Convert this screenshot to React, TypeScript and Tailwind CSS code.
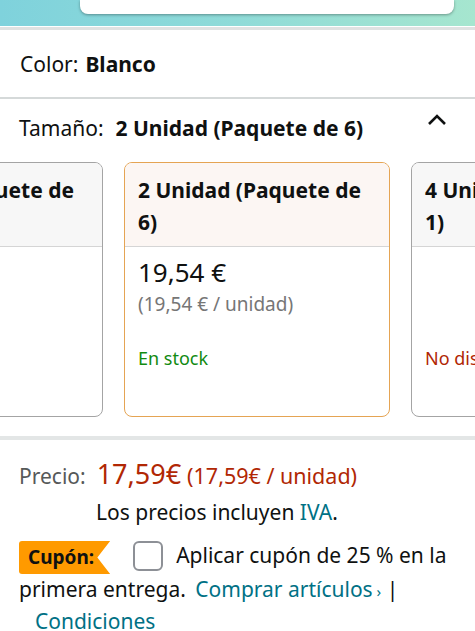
type Option = {
  label: string;
  price?: string;
  unit?: string;
  stock: string;
  inStock: boolean;
  selected?: boolean;
};

const options: Option[] = [
  { label: '1 Unidad (Paquete de 3)', price: '', unit: '', stock: '', inStock: true },
  { label: '2 Unidad (Paquete de 6)', price: '19,54 €', unit: '(19,54 € / unidad)', stock: 'En stock', inStock: true, selected: true },
  { label: '4 Unidad (Paquete de 1)', stock: 'No disponible', inStock: false },
];

function SizeCard({ opt }: { opt: Option }) {
  return (
    <div
      className={`shrink-0 w-[266px] h-[255px] rounded-[8px] border overflow-hidden flex flex-col ${
        opt.selected ? 'border-[#e5a453]' : 'border-[#a4a4a4]'
      }`}
    >
      <div
        className={`h-[84px] px-[13px] pt-[11px] font-bold text-[21px] leading-[32px] text-[#0f1111] border-b ${
          opt.selected ? 'bg-[#fcf6f3] border-[#d5d5d5]' : 'bg-[#f7f7f7] border-[#d5d5d5]'
        }`}
      >
        {opt.label}
      </div>
      <div className="px-[13px] pt-[8px] flex flex-col">
        <div className="h-[34px] text-[26px] leading-[34px] text-[#0f1111]">{opt.price}</div>
        <div className="h-[30px] text-[19px] leading-[30px] text-[#767676]">{opt.unit}</div>
        <div
          className={`mt-[24px] text-[18px] leading-[30px] ${opt.inStock ? 'text-[#118a11]' : 'text-[#b12704]'}`}
        >
          {opt.stock}
        </div>
      </div>
    </div>
  );
}

export default function App() {
  return (
    <div className="w-[475px] h-[631px] overflow-hidden bg-white text-[#0f1111] font-['Noto_Sans',sans-serif]">
      {/* top search band */}
      <div className="h-[26px] bg-gradient-to-r from-[#7fd2dc] via-[#8fdbd8] to-[#a6e6cf] flex justify-end pr-[21px]">
        <div className="w-[374px] h-[14px] bg-white rounded-b-[8px] shadow-[0_1px_3px_rgba(0,0,0,0.35)]" />
      </div>
      <div className="h-[1px] bg-white" />
      <div className="h-[3px] bg-[#dfe2e2]" />

      <div className="h-[67px] flex items-center px-[20px] pt-[3px] text-[21px]">
        <span>Color:</span>
        <span className="ml-[7px] font-bold">Blanco</span>
      </div>
      <div className="h-[2px] bg-[#d5d9d9]" />

      <div className="h-[60px] flex items-center pl-[19px] pr-[28px] text-[21px]">
        <span>Tamaño:</span>
        <span className="ml-[12px] font-bold">2 Unidad (Paquete de 6)</span>
        <svg className="ml-auto mb-[18px]" width="20" height="12" viewBox="0 0 20 12" fill="none">
          <polyline points="2,10 10,2 18,10" stroke="#0f1111" strokeWidth="2.6" />
        </svg>
      </div>

      <div className="flex gap-[21px] ml-[-163px] mt-[3px]">
        {options.map((o) => (
          <SizeCard key={o.label} opt={o} />
        ))}
      </div>

      <div className="mt-[19px] h-[4px] bg-[#e3e6e6]" />

      <div className="px-[19px] pt-[14px]">
        <div className="flex items-baseline">
          <span className="text-[21px] text-[#565959]">Precio:</span>
          <span className="ml-[11px] text-[27px] text-[#b12704]">17,59€</span>
          <span className="ml-[6px] text-[21.5px] text-[#b12704]">(17,59€ / unidad)</span>
        </div>
        <div className="pl-[77px] mt-[2px] text-[21px]">
          Los precios incluyen <span className="text-[#007185]">IVA</span>.
        </div>
        <div className="mt-[12px] text-[21px] leading-[30px]">
          <span className="inline-block align-middle h-[33px] pl-[9px] pr-[16px] rounded-l-[3px] bg-[#ff9a00] font-bold text-[19px] leading-[33px] [clip-path:polygon(0_0,100%_0,86%_50%,100%_100%,0_100%)]">
            Cupón:
          </span>
          <span className="inline-block align-middle ml-[23px] mr-[13px] mb-[3px] w-[30px] h-[30px] rounded-[6px] border-2 border-[#8d9096] bg-white" />
          Aplicar cupón de 25 % en la primera entrega.{' '}
          <span className="text-[#007185] ml-[4px]">Comprar artículos</span>
          <span className="text-[#007185] text-[15px]"> ›</span> |{' '}
          <span className="text-[#007185] ml-[16px]">Condiciones</span>
        </div>
      </div>
    </div>
  );
}
